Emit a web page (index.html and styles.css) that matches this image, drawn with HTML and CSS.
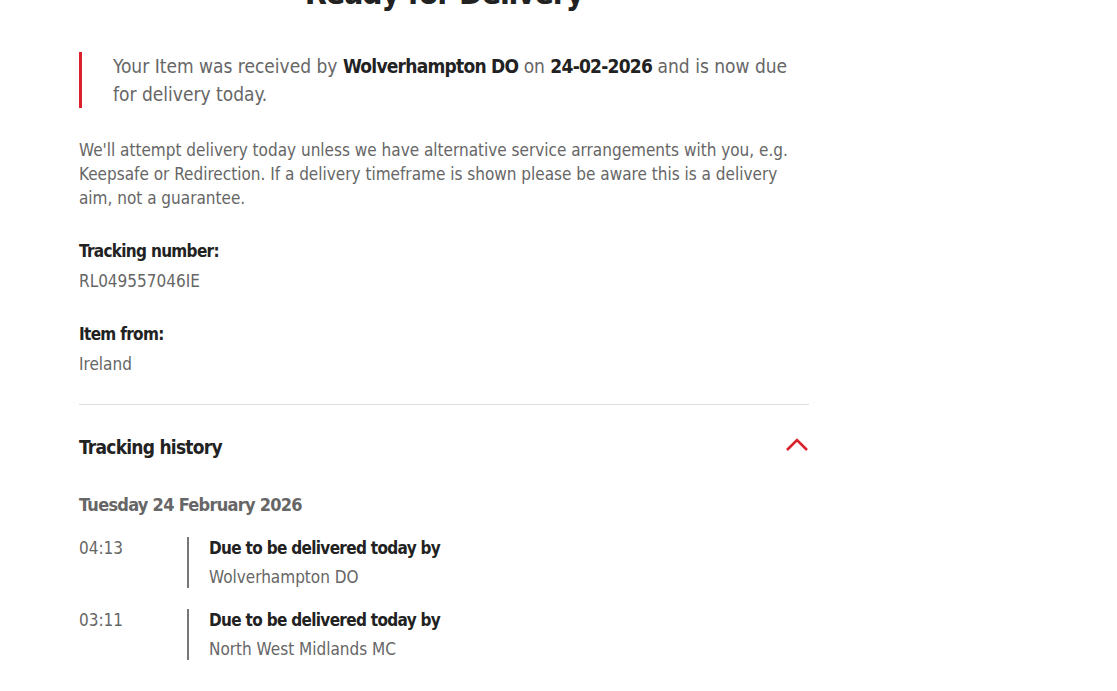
FILE: index.html
```html
<!DOCTYPE html>
<html lang="en">
  <head>
    <meta charset="utf-8" />
    <meta name="viewport" content="width=device-width, initial-scale=1.0" />
    <link rel="stylesheet" href="styles.css">
    <title>Track your item</title>
  </head>

  <body>
    <main class="tracking">
      <h1 class="status">Ready for Delivery</h1>

      <div class="notice">
        Your Item was received by <strong>Wolverhampton DO</strong> on
        <strong>24-02-2026</strong> and is now due for delivery today.
      </div>

      <p class="info">
        We'll attempt delivery today unless we have alternative service arrangements with you, e.g.
        Keepsafe or Redirection. If a delivery timeframe is shown please be aware this is a delivery
        aim, not a guarantee.
      </p>

      <dl class="details">
        <dt>Tracking number:</dt>
        <dd>RL049557046IE</dd>
        <dt>Item from:</dt>
        <dd>Ireland</dd>
      </dl>

      <section class="history">
        <div class="history-head">
          <h3>Tracking history</h3>
          <svg class="chevron" width="24" height="14" viewBox="0 0 24 14">
            <path d="M2 12 L12 2 L22 12" fill="none" stroke="#da202a" stroke-width="2.6" />
          </svg>
        </div>

        <h4 class="day">Tuesday 24 February 2026</h4>

        <ul class="events">
          <li>
            <span class="time">04:13</span>
            <div class="event">
              <strong>Due to be delivered today by</strong>
              <span>Wolverhampton DO</span>
            </div>
          </li>
          <li>
            <span class="time">03:11</span>
            <div class="event">
              <strong>Due to be delivered today by</strong>
              <span>North West Midlands MC</span>
            </div>
          </li>
        </ul>
      </section>
    </main>
  </body>
</html>
```

FILE: styles.css
```css
body {
  margin: 0;
  background-color: #fff;
  color: #666;
  font-family: "Liberation Sans Narrow", "DejaVu Sans Condensed", "Liberation Sans", sans-serif;
  font-size: 17px;
}

strong,
h1,
h3,
h4,
dt {
  letter-spacing: -0.04em;
}

.tracking {
  width: 730px;
  margin: 0 0 0 79px;
}

.status {
  margin: -27px 0 0;
  text-align: center;
  font-size: 32px;
  line-height: 40px;
  color: #222;
}

.notice {
  margin-top: 39px;
  border-left: 3px solid #da202a;
  padding: 0 0 0 31px;
  font-size: 19px;
  line-height: 28px;
  color: #666;
}

.notice strong {
  color: #222;
}

.info {
  margin: 30px 0 0;
  line-height: 24px;
}

.details {
  margin: 26px 0 0;
  line-height: 30px;
}

.details dt {
  font-weight: bold;
  color: #222;
}

.details dd {
  margin: 0 0 23px;
}

.history {
  border-top: 1px solid #ddd;
  margin-top: 25px;
}

.history-head {
  display: flex;
  justify-content: space-between;
  align-items: center;
  padding: 31px 0 0;
}

.history-head h3 {
  margin: 0;
  font-size: 19px;
  color: #222;
}

.chevron {
  margin-top: -4px;
}

.day {
  margin: 36px 0 0;
  font-size: 18px;
  color: #666;
}

.events {
  list-style: none;
  margin: 22px 0 0;
  padding: 0;
}

.events li {
  display: flex;
  align-items: flex-start;
  margin-bottom: 21px;
  line-height: 22px;
}

.time {
  width: 108px;
}

.event {
  border-left: 2px solid #777;
  padding-left: 20px;
  display: flex;
  flex-direction: column;
  gap: 7px;
}

.event strong {
  color: #222;
}
```
